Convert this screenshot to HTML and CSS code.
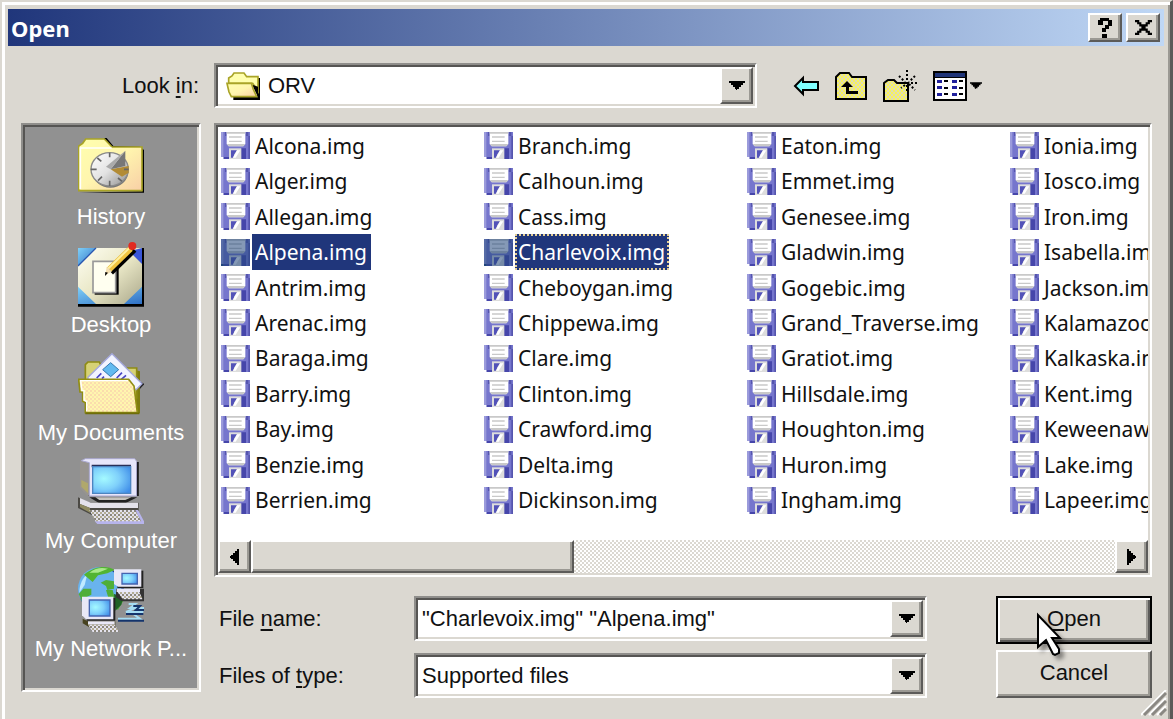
FILE: index.html
```
<!DOCTYPE html>
<html lang="en">
<head>
    <meta charset="UTF-8">
    <meta name="viewport" content="width=device-width, initial-scale=1.0">
    <title>Open</title>
    <link rel="stylesheet" href="styles.css">
</head>
<body>
    <!-- shared icons -->
    <svg class="sprites" width="0" height="0" aria-hidden="true">
        <defs>
            <pattern id="peach" width="12" height="12" patternUnits="userSpaceOnUse">
                <rect width="12" height="12" fill="#fff6ae"/>
                <rect width="6" height="6" fill="#fbdcac"/>
                <rect x="6" y="6" width="6" height="6" fill="#fbe3b0"/>
            </pattern>
            <pattern id="yellow" width="4" height="4" patternUnits="userSpaceOnUse">
                <rect width="4" height="4" fill="#f8f458"/>
                <rect width="2" height="2" fill="#dedbb8"/>
                <rect x="2" y="2" width="2" height="2" fill="#dedbb8"/>
            </pattern>
            <pattern id="keys" width="12" height="12" patternUnits="userSpaceOnUse">
                <rect width="12" height="12" fill="#e4e2ee"/>
                <rect width="6" height="6" fill="#8b877c"/>
                <rect x="6" y="6" width="6" height="6" fill="#b3ad94"/>
            </pattern>
            <linearGradient id="folder" x1="0" y1="0" x2="1" y2="1">
                <stop offset="0" stop-color="#ffffae"/>
                <stop offset=".5" stop-color="#fff5ae"/>
                <stop offset="1" stop-color="#f8cfa6"/>
            </linearGradient>
            <linearGradient id="metal" x1="0" y1="0" x2="1" y2="1">
                <stop offset="0" stop-color="#ffffff"/>
                <stop offset=".5" stop-color="#e2e2e2"/>
                <stop offset="1" stop-color="#8c8c8c"/>
            </linearGradient>
            <linearGradient id="blotter" x1="0" y1="0" x2="1" y2="1">
                <stop offset="0" stop-color="#fffff4"/>
                <stop offset=".5" stop-color="#e9e7c6"/>
                <stop offset="1" stop-color="#aaa78a"/>
            </linearGradient>
            <linearGradient id="corner" x1="0" y1="0" x2="1" y2="1">
                <stop offset="0" stop-color="#7fd0f8"/>
                <stop offset="1" stop-color="#2f6fc4"/>
            </linearGradient>
            <radialGradient id="screen" cx=".3" cy=".45" r=".8">
                <stop offset="0" stop-color="#a4faff"/>
                <stop offset=".5" stop-color="#7fd0fb"/>
                <stop offset="1" stop-color="#3f8de8"/>
            </radialGradient>
        </defs>
        <symbol id="disk" viewBox="0 0 87 81">
            <path fill="#7676cd" d="M0 0h87v81H8v-6H0z"/>
            <path fill="#9b9bdb" d="M0 0h7v75H0z"/>
            <path fill="#5555ae" d="M12 0h5v12h-5zM74 0h8v12h-8zM82 12h5v69h-5z"/>
            <path fill="#fff" d="M17 0h56v36l-6 7H23l-6-7z"/>
            <path fill="#c9c9c9" d="M17 0h56v5H17zM24 13h38v4H24zM24 26h38v4H24zM17 36h56l-6 7H23z"/>
            <path fill="#4646aa" d="M60 49h15v32H60zM8 75h18v6H8z"/>
            <path fill="#ddd" d="M24 49h37v32H24z"/>
            <path fill="#5252b8" d="M30 55h18l-8 12-4 10h-6z"/>
            <path fill="#fff" d="M48 55h10L44 77h-8z"/>
        </symbol>
        <symbol id="caret" viewBox="0 0 16 9"><path d="M0 0h16v2h-2v2h-2v2h-2v2H8v1H7V8H6V6H4V4H2V2H0z"/></symbol>
    </svg>

    <div class="dialog">
        <div class="titlebar">
            <h1 class="title">Open</h1>
            <button class="title-btn" type="button" aria-label="Help">
                <svg width="15" height="20" viewBox="0 0 15 20"><path d="M2 0h9v2h3v6h-3v3H8v3H4v-4h3V7h3V3H5v4H0V2h2zM4 16h5v4H4z"/></svg>
            </button>
            <button class="title-btn" type="button" aria-label="Close">
                <svg width="17" height="15" viewBox="0 0 16 14"><path d="M0 0h4v2h2v2h4V2h2V0h4v2h-2v2h-2v2h-2v2h2v2h2v2h2v2h-4v-2h-2v-2H6v2H4v2H0v-2h2v-2h2V8h2V6H4V4H2V2H0z"/></svg>
            </button>
        </div>

        <form class="content">
            <div class="lookin">
                <label class="lookin-label" for="lookin">Look <u>i</u>n:</label>
                <div class="combo lookin-combo">
                    <svg class="combo-icon" width="34" height="28" viewBox="0 0 102 84">
                        <path d="M22 74V84H102V18H94V74z"/>
                        <path fill="#ffffae" stroke="#a9a427" stroke-width="5" d="M8 34V18l10-6 6-9h30l8 11h34v44L80 34z"/>
                        <path d="M78 38l18 38V44z"/>
                        <path fill="url(#folder)" stroke="#a9a427" stroke-width="5" d="M3 34H76l6 18 10 22H16L9 60z"/>
                    </svg>
                    <select class="combo-field" id="lookin"><option>ORV</option></select>
                    <span class="drop"><svg width="16" height="9"><use href="#caret"/></svg></span>
                </div>
                <div class="tools">
                    <button class="tool" type="button" aria-label="Back">
                        <svg width="26" height="22" viewBox="0 0 26 22"><path fill="#80ffff" stroke="#000" stroke-width="2" d="M2 11L10 3V7H25V15H10V19z"/></svg>
                    </button>
                    <button class="tool" type="button" aria-label="Up one level">
                        <svg width="32" height="28" viewBox="0 0 32 28"><path fill="url(#yellow)" stroke="#000" stroke-width="2" d="M1 27V5l4-4h9l3 4h14v22z"/><path d="M1 26h30v2H1z"/><path d="M12 9l6 6h-4v4h9v3H11v-7H6z"/></svg>
                    </button>
                    <button class="tool" type="button" aria-label="Create new folder">
                        <svg width="34" height="32" viewBox="0 0 34 32"><path fill="url(#yellow)" stroke="#000" stroke-width="2" d="M1 31V13l4-3h6l3 3h11v18z"/><path fill="none" stroke="#000" stroke-width="2" stroke-dasharray="2 2" d="M24 0v12M16 6l6 6M32 6l-6 6M18 13h-4M34 13h-8M26 14l6 6M24 15v8M22 15l-4 3"/></svg>
                    </button>
                    <button class="tool views" type="button" aria-label="Views">
                        <svg width="34" height="30" viewBox="0 0 34 30"><path d="M0 0h34v30H0z"/><path fill="#1f3478" d="M2 2h30v4H2z"/><path fill="#fff" d="M2 7h30v21H2z"/><path fill="#20209c" d="M4 9h5v3H4zM4 15h5v3H4zM4 22h5v3H4zM19 9h5v3h-5zM19 15h5v3h-5zM19 22h5v3h-5z"/><path d="M11 9h4v2h-4zM11 16h4v2h-4zM11 22h4v2h-4zM26 9h4v2h-4zM26 16h4v2h-4zM26 22h4v2h-4z"/></svg>
                        <svg width="12" height="7"><use href="#caret"/></svg>
                    </button>
                </div>
            </div>

            <nav class="places">
                <a class="place" href="#history">
                    <svg class="place-icon" viewBox="0 0 198 198">
                        <path d="M4 176h194V48l-12-10-80-2-20-24h-8l24 30h90v130z"/>
                        <path fill="url(#folder)" stroke="#a9a427" stroke-width="5" d="M2 170V36l12-8 9-13h56l23 24h90v131z"/>
                        <path fill="none" stroke="#fff" stroke-width="5" d="M7 165V42h94"/>
                        <ellipse cx="97" cy="113" rx="54" ry="48" fill="#777"/>
                        <ellipse cx="95" cy="106" rx="56" ry="50" fill="url(#metal)" stroke="#8a8a8a" stroke-width="4"/>
                        <path fill="#b28b35" d="M98 106l54-10v20l-20 12z"/>
                        <path fill="#777" d="M98 106l44-56v46z"/>
                        <path fill="#aaa" d="M98 106l44-56-58 48z"/>
                        <path fill="none" stroke="#666" stroke-width="5" d="M95 56v14M95 156v-16M38 106h18M152 106h-14M58 72l12 10M60 140l12-12M132 142l-12-10"/>
                    </svg>
                    History
                </a>
                <a class="place" href="#desktop">
                    <svg class="place-icon" viewBox="0 0 198 198">
                        <path d="M0 18h198v176H0z"/>
                        <path fill="url(#blotter)" d="M0 18h192v168H0z"/>
                        <path fill="url(#corner)" d="M0 18h54L0 72z"/>
                        <path fill="#3a56d8" d="M192 18v48l-38-38z"/>
                        <path fill="url(#corner)" d="M0 134l54 52H0zM192 134v52h-54z"/>
                        <path fill="none" stroke="#2b57b0" stroke-width="4" d="M54 18L0 72"/>
                        <path d="M50 62h72v96H50z"/>
                        <path fill="#fffff0" stroke="#999" stroke-width="5" d="M45 58h68v94H45z"/>
                        <path stroke="#000" stroke-width="26" d="M96 88l70-68"/>
                        <path stroke="#f1c440" stroke-width="18" d="M94 82l64-62"/>
                        <path stroke="#fff0a0" stroke-width="6" d="M90 80l64-62"/>
                        <path fill="#f4dfb0" d="M86 74l16 14-20 12z"/>
                        <path d="M82 90l8 2-9 10z"/>
                        <circle cx="163" cy="12" r="12" fill="#e22b22"/>
                    </svg>
                    Desktop
                </a>
                <a class="place" href="#documents">
                    <svg class="place-icon" viewBox="0 0 198 198">
                        <path fill="#7e7c10" d="M172 60l14 4v126h-14z"/>
                        <path fill="#d6d276" stroke="#8f8c14" stroke-width="5" d="M22 92V44l8-8h34l8 18h104v90H22z"/>
                        <path fill="#222" d="M185 118l14-16-10-6z"/>
                        <path fill="#f2f4ff" stroke="#a4a8dc" stroke-width="4" d="M102 11l90 90-18 18-50-22H30V82z"/>
                        <path fill="#62baf0" stroke="#3478b0" stroke-width="3" d="M98 38l24 21-24 21-24-21z"/>
                        <path fill="none" stroke="#4644c4" stroke-width="5" d="M56 84l14-14M72 86l6-6M116 84l16-16M130 88l14-12"/>
                        <path fill="url(#peach)" stroke="#918e14" stroke-width="5" d="M2 88H152l16 20 10 80H22V158l-8-4v-28H6z"/>
                        <path fill="none" stroke="#fff" stroke-width="4" d="M26 184v-30l-8-4v-28h-6L8 92h142"/>
                        <path fill="none" stroke="#6f6d08" stroke-width="5" d="M22 190H184"/>
                    </svg>
                    My Documents
                </a>
                <a class="place" href="#computer">
                    <svg class="place-icon" viewBox="0 0 198 198">
                        <path d="M30 114h152V12h-8v100H30z"/>
                        <path fill="#98948f" d="M6 10l26-6v114L6 90z"/>
                        <path fill="#b0a86c" d="M10 66l20 10v30L10 86z"/>
                        <path fill="#e7e6fa" stroke="#aaa8ce" stroke-width="3" d="M10 8l12-6h148l6 8v104H34V14z"/>
                        <path fill="#282f58" d="M41 20h118v8H41z"/>
                        <path fill="url(#screen)" stroke="#4c84c0" stroke-width="4" d="M44 26h114v80H44z"/>
                        <path fill="#222" d="M34 118h144l-36 18H64z"/>
                        <path fill="#c5c2bd" d="M52 118h108l-18 8H64z"/>
                        <path fill="#4b4944" d="M0 118l34 16h148v24l-20 12H40L0 150z"/>
                        <path fill="#e4e2ea" d="M6 120l32 14h142v16H36L6 138z"/>
                        <path fill="#8f8a60" d="M6 138l30 12v14L6 148z"/>
                        <path fill="url(#keys)" d="M34 156h138l18 36H54z"/>
                        <path fill="#b7b4ec" d="M50 190h148v8H58zM172 156h8l18 34h-8z"/>
                    </svg>
                    My Computer
                </a>
                <a class="place" href="#network">
                    <svg class="place-icon" viewBox="0 0 198 198">
                        <circle cx="70" cy="72" r="68" fill="#1e3e96"/>
                        <circle cx="65" cy="68" r="65" fill="#69b3ee"/>
                        <path fill="#bfeaff" d="M4 80c0-24 10-44 24-55l-8 32z"/>
                        <path fill="#52b432" d="M18 26C50-2 90-2 110 12L88 22 60 28 44 48z"/>
                        <path fill="#a9e98a" d="M34 20C54 4 72 4 90 8L60 20z"/>
                        <path fill="#4fae38" d="M2 84l14-16h24v18L20 96l-4 18zM68 50l16-8 24 4v22l-20 4-4-12zM84 72h20l6 24 26 8-16 28-24-20z"/>
                        <path fill="#206226" d="M108 84l28 8-6 24-18 18z"/>
                        <path fill="#222" d="M118 14h78v52h-78z"/>
                        <path fill="#e9e8f7" d="M108 10h82v52h-70l-12-8z"/>
                        <path fill="url(#screen)" stroke="#4564b0" stroke-width="4" d="M132 22h46v32h-46z"/>
                        <path fill="#333" d="M114 68h84v38h-66l-18-12z"/>
                        <path fill="url(#keys)" d="M116 74h66l12 26h-60z"/>
                        <path fill="#e9e8f7" d="M116 68h70v10h-70z"/>
                        <path fill="none" stroke="#a6ddf4" stroke-width="6" d="M152 114h20l-16 12h42M196 138h-52l24-10M120 158h66l-20-14"/>
                        <path fill="none" stroke="#14346c" stroke-width="6" d="M166 120h20l-12 12h24M120 164h78M144 144h52"/>
                        <path fill="#222" d="M20 96h92v68H26z"/>
                        <path fill="#e9e8f7" d="M12 92h94v68H24l-12-12z"/>
                        <path fill="url(#screen)" stroke="#4564b0" stroke-width="4" d="M34 102h62v48H34z"/>
                        <path fill="#474220" d="M14 158l16 8h82v18H34l-20-12z"/>
                        <path fill="#e9e8f7" d="M30 166h80v10H30z"/>
                        <path fill="url(#keys)" d="M30 176h80l14 22H44z"/>
                    </svg>
                    My Network P...
                </a>
            </nav>

            <div class="files">
                <ul class="file-list" id="fileList"></ul>
                <div class="scrollbar">
                    <button class="scroll-btn" type="button" aria-label="Scroll left"><svg width="9" height="16" viewBox="0 0 9 16"><path d="M9 0v16H7v-2H5v-2H3v-2H1V9H0V7h1V6h2V4h2V2h2V0z"/></svg></button>
                    <div class="thumb"></div>
                    <div class="track"></div>
                    <button class="scroll-btn" type="button" aria-label="Scroll right"><svg width="9" height="16" viewBox="0 0 9 16"><path d="M0 0v16h2v-2h2v-2h2v-2h2V9h1V7H8V6H6V4H4V2H2V0z"/></svg></button>
                </div>
            </div>

            <div class="bottom">
                <div class="fields">
                    <label for="filename">File <u>n</u>ame:</label>
                    <div class="combo">
                        <input class="combo-field" type="text" id="filename" value='"Charlevoix.img" "Alpena.img"'>
                        <button class="drop" type="button" aria-label="Recent names"><svg width="16" height="9"><use href="#caret"/></svg></button>
                    </div>
                    <label for="filetype">Files of <u>t</u>ype:</label>
                    <div class="combo">
                        <select class="combo-field" id="filetype"><option>Supported files</option></select>
                        <span class="drop"><svg width="16" height="9"><use href="#caret"/></svg></span>
                    </div>
                </div>
                <div class="actions">
                    <button class="btn btn-default" type="button"><span><u>O</u>pen</span></button>
                    <button class="btn" type="button">Cancel</button>
                    <svg class="pointer" width="26" height="46" viewBox="0 0 26 46"><path fill="#fff" stroke="#000" stroke-width="2" d="M2 3V35l8-7 7 14 2 1 4-2v-4l-7-11h8z"/></svg>
                </div>
            </div>
        </form>
        <svg class="grip" width="26" height="26" viewBox="0 0 26 26"><path stroke="#fff" stroke-width="2" d="M0 25L25 0M8 25L25 8M16 25l9-9"/><path stroke="#8a8883" stroke-width="3" d="M3 25L25 3M11 25l14-14M19 25l6-6"/></svg>
    </div>

    <script>
        var names = [
            "Alcona", "Alger", "Allegan", "Alpena", "Antrim", "Arenac", "Baraga", "Barry", "Bay", "Benzie", "Berrien",
            "Branch", "Calhoun", "Cass", "Charlevoix", "Cheboygan", "Chippewa", "Clare", "Clinton", "Crawford", "Delta", "Dickinson",
            "Eaton", "Emmet", "Genesee", "Gladwin", "Gogebic", "Grand_Traverse", "Gratiot", "Hillsdale", "Houghton", "Huron", "Ingham",
            "Ionia", "Iosco", "Iron", "Isabella", "Jackson", "Kalamazoo", "Kalkaska", "Kent", "Keweenaw", "Lake", "Lapeer"
        ];
        var html = "";

        names.forEach(function(name) {
            var state = "";
            if (name === "Alpena") state = " selected";
            if (name === "Charlevoix") state = " selected focused";
            html += '<li class="file' + state + '"><svg class="disk" width="29" height="27"><use href="#disk"/></svg>';
            html += '<span class="file-name">' + name + '.img</span></li>';
        });

        document.getElementById("fileList").innerHTML = html;
    </script>
</body>
</html>
```
FILE: styles.css
```
* {
    box-sizing: border-box;
}

body {
    margin: 0;
    background-color: #dbd8d1;
    font-family: "Liberation Sans", Arial, sans-serif;
    font-size: 22px;
    line-height: 26px;
    color: #111;
}

button, input, select {
    font: inherit;
    color: inherit;
    margin: 0;
    padding: 0;
    border: none;
    border-radius: 0;
    background: none;
}

svg {
    display: block;
    flex: none;
}

u {
    text-decoration-thickness: 2px;
    text-underline-offset: 3px;
}

.sprites {
    position: absolute;
}

.dialog {
    position: relative;
    min-height: 100vh;
    padding: 7px 6px 4px;
    border: 2px solid #dbd8d1;
    border-right: 3px solid #5c5b59;
    border-bottom: none;
    box-shadow: inset 3px 3px 0 #fff, inset -2px 0 0 #9b9993;
}

/* title bar */
.titlebar {
    display: flex;
    align-items: center;
    gap: 4px;
    height: 37px;
    padding: 0 4px 0 3px;
    background: linear-gradient(to right, #20367b, #bfd7f5);
}

.title {
    flex: 1;
    margin: 0;
    font-family: "Noto Sans", sans-serif;
    font-size: 22px;
    line-height: 30px;
    color: #fff;
}

.title-btn, .drop, .scroll-btn, .thumb, .btn {
    display: flex;
    align-items: center;
    justify-content: center;
    background-color: #dbd8d1;
    border: 2px solid;
    border-color: #fff #5c5b59 #5c5b59 #fff;
    box-shadow: inset -2px -2px 0 #9b9993;
}

.title-btn {
    width: 34px;
    height: 29px;
}

.content {
    display: grid;
    grid-template-columns: 180px minmax(0, 1fr);
    column-gap: 13px;
    padding: 17px 12px 0 13px;
}

/* look in row */
.lookin {
    grid-column: 1 / 3;
    display: flex;
    align-items: center;
    margin-bottom: 15px;
}

.lookin-label {
    width: 193px;
    padding-right: 15px;
    text-align: right;
}

.combo, .places, .files {
    border: 2px solid;
    border-color: #8f8e8b #fff #fff #8f8e8b;
    box-shadow: inset 2px 2px 0 #565553, inset -2px -2px 0 #dbd8d1;
}

.combo {
    display: flex;
    align-items: stretch;
    height: 45px;
    padding: 2px;
    background-color: #fff;
}

.lookin-combo {
    flex: 0 1 543px;
}

.combo-icon {
    align-self: center;
    margin-left: 8px;
}

.combo-field {
    flex: 1;
    min-width: 0;
    padding: 0 4px;
    appearance: none;
    outline: none;
}

.lookin-combo .combo-field {
    padding-left: 8px;
}

.drop {
    flex: none;
    width: 33px;
    border-color: #fff #5c5b59 #5c5b59 #fff;
}

.tools {
    display: flex;
    align-items: center;
    gap: 16px;
    margin-left: 36px;
}

.tool {
    display: flex;
    align-items: center;
    gap: 3px;
}

/* places bar */
.places {
    display: flex;
    flex-direction: column;
    grid-row: 2 / 4;
    grid-column: 1;
    margin-bottom: 22px;
    padding: 9px 0 0;
    background-color: #919191;
}

.place {
    display: flex;
    flex-direction: column;
    align-items: center;
    height: 108px;
    line-height: 34px;
    color: #fff;
    text-decoration: none;
    white-space: nowrap;
}

.place-icon {
    width: 66px;
    height: 66px;
}

/* file list */
.files {
    padding: 2px;
    background-color: #fff;
}

.file-list {
    display: grid;
    grid-template-rows: repeat(11, 1fr);
    grid-auto-flow: column;
    grid-auto-columns: 263px;
    height: 413px;
    margin: 0;
    padding: 1px 0 22px 3px;
    overflow: hidden;
    list-style: none;
    font-family: "Noto Sans", sans-serif;
    font-size: 21px;
}

.file {
    display: flex;
    align-items: center;
    gap: 2px;
}

.file-name {
    align-self: stretch;
    display: flex;
    align-items: center;
    padding: 0 4px 0 3px;
    white-space: nowrap;
}

.selected .file-name {
    background-color: #20367b;
    color: #fff;
}

.focused .file-name {
    outline: 2px dotted #e4cf94;
    outline-offset: -2px;
}

.selected .disk {
    background-color: #20467b;
}

.selected .disk use {
    opacity: 0.45;
}

.scrollbar {
    display: flex;
    height: 33px;
}

.scroll-btn {
    width: 33px;
}

.thumb {
    flex: 0 1 323px;
}

.track {
    flex: 1;
    background: repeating-conic-gradient(#dbd8d1 0 25%, #fff 0 50%) 0 0 / 4px 4px;
}

/* file name and type */
.bottom {
    grid-column: 2;
    display: flex;
    justify-content: space-between;
    gap: 24px;
    margin-top: 19px;
    margin-bottom: 16px;
}

.fields {
    flex: 0 1 713px;
    display: grid;
    grid-template-columns: 200px minmax(0, 1fr);
    align-items: center;
    row-gap: 12px;
}

.fields label {
    padding-left: 5px;
}

.actions {
    position: relative;
    display: flex;
    flex-direction: column;
    gap: 6px;
    width: 156px;
}

.btn {
    height: 48px;
    padding-bottom: 3px;
}

.btn-default {
    border-color: #000;
    box-shadow: inset 2px 2px 0 #fff, inset -2px -2px 0 #5c5b59, inset -4px -4px 0 #9b9993;
}

.pointer {
    position: absolute;
    left: 40px;
    top: 16px;
    filter: drop-shadow(4px 4px 2px rgba(0, 0, 0, 0.4));
}

.grip {
    position: absolute;
    right: 3px;
    bottom: 3px;
}
```
